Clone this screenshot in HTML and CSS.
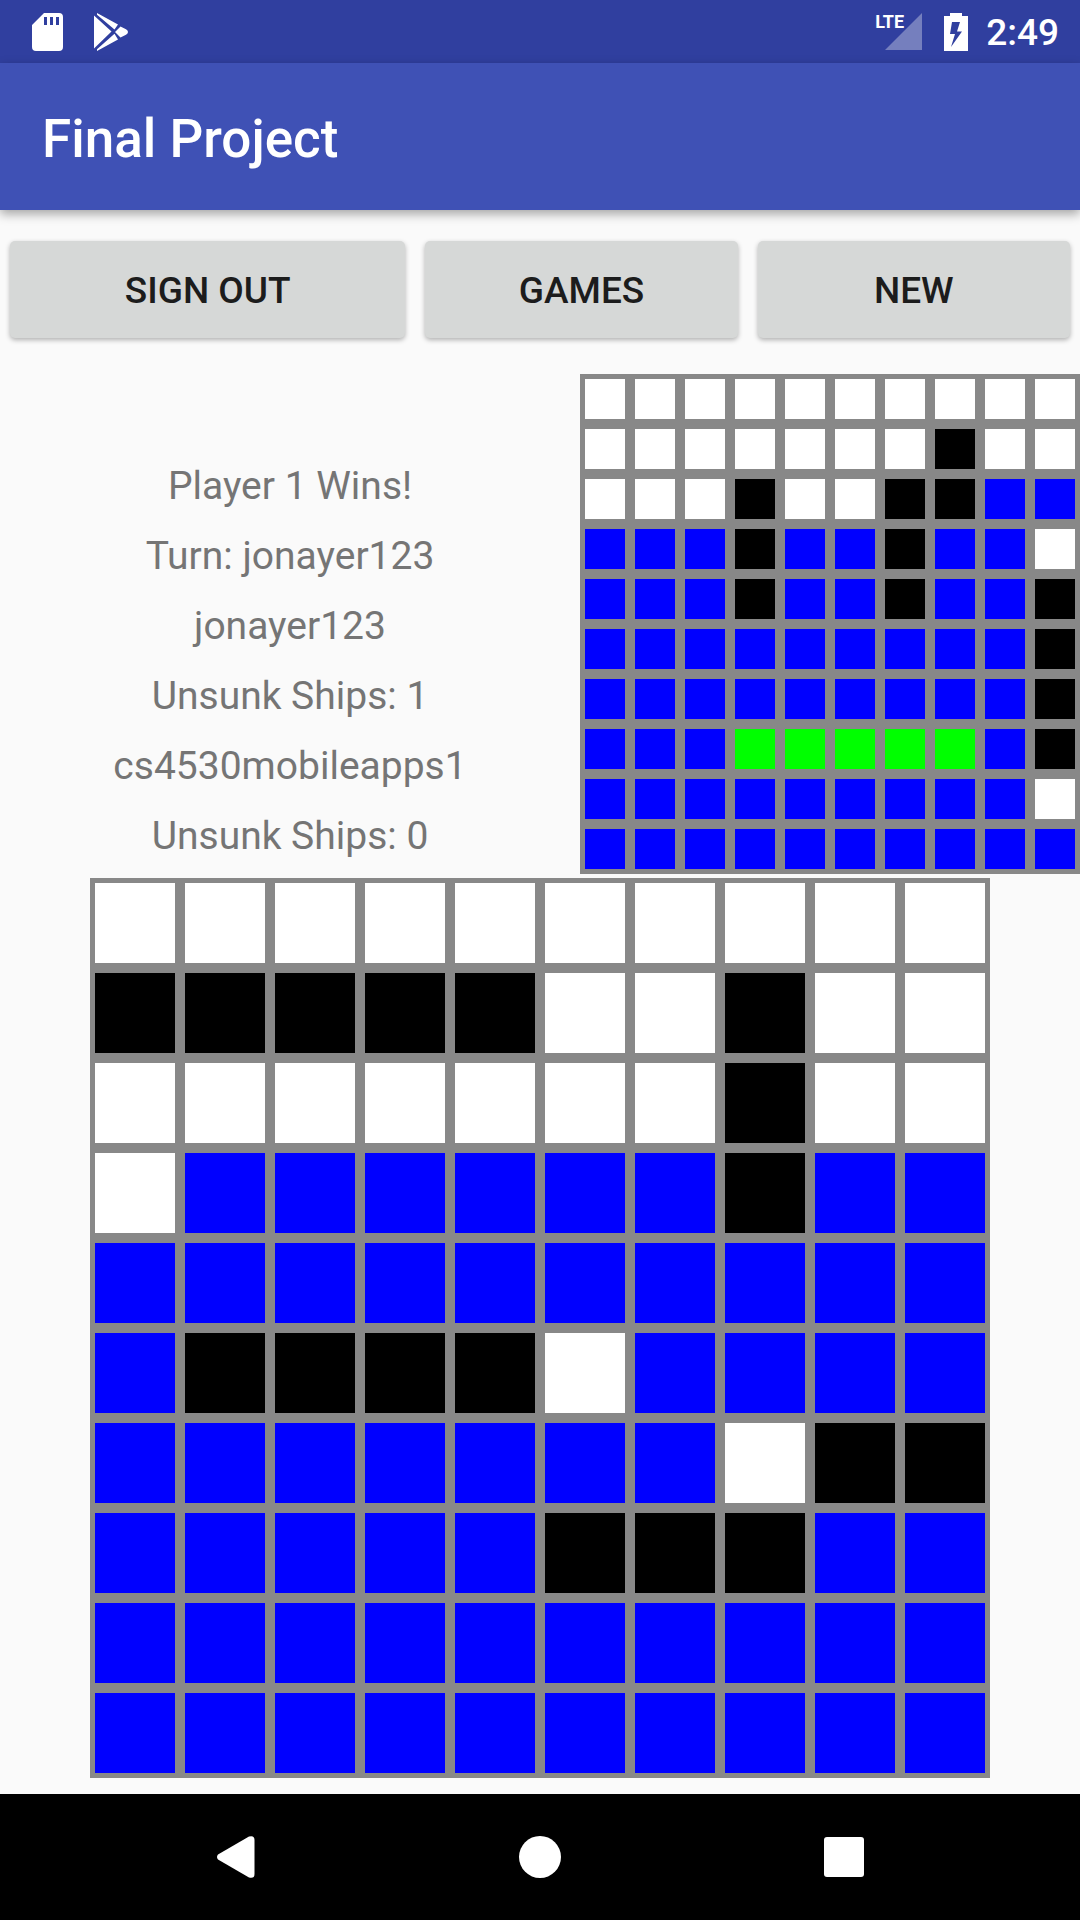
FILE: index.html
```
<!DOCTYPE html>
<html lang="en">
<head>
<meta charset="utf-8">
<meta name="viewport" content="width=device-width, initial-scale=1">
<title>Final Project</title>
<link rel="stylesheet" href="styles.css">
</head>
<body>
<div class="status-bar">
  <svg class="icon-sd" viewBox="0 0 31 38" aria-hidden="true"><path fill-rule="evenodd" d="M12 0H27a4 4 0 0 1 4 4V34a4 4 0 0 1-4 4H4a4 4 0 0 1-4-4V12zM12 4v8h3V4zM18 4v8h3V4zM24 4v8h3V4z"/></svg>
  <svg class="icon-play" viewBox="0 0 34 38" aria-hidden="true"><path d="M0 2.5 17.5 18.5 0 35.5zM3 0 24 11.500 20.500 16.500 3 1.800zM3 38 24 26.500 20.500 20.800 3 36.200zM26.500 13.500 32 16.300Q36 19 32 21.800L26.500 24.500 21 19z"/></svg>
  <div class="signal">
    <svg class="icon-signal" viewBox="0 0 37 37" aria-hidden="true"><path d="M37 0V37H0z"/></svg>
    <span class="network">LTE</span>
  </div>
  <svg class="icon-battery" viewBox="0 0 24 38" aria-hidden="true"><path fill-rule="evenodd" d="M6 0H18V3H24V38H0V3H6zM8 9 6 21H11L7 34 18 18.500H13L16 9z"/></svg>
  <time class="clock">2:49</time>
</div>
<header class="app-bar"><h1 class="title">Final Project</h1></header>
<main class="content">
  <div class="actions">
    <button class="action" type="button">SIGN OUT</button>
    <button class="action" type="button">GAMES</button>
    <button class="action" type="button">NEW</button>
  </div>
  <section class="summary">
    <div class="info">
      <p>Player 1 Wins!</p>
      <p>Turn: jonayer123</p>
      <p>jonayer123</p>
      <p>Unsunk Ships: 1</p>
      <p>cs4530mobileapps1</p>
      <p>Unsunk Ships: 0</p>
    </div>
    <div class="board board-own" id="own" role="img" aria-label="Your fleet"></div>
  </section>
  <div class="board board-target" id="target" role="img" aria-label="Opponent waters"></div>
</main>
<nav class="nav-bar">
  <button class="nav-button" type="button" aria-label="Back"><svg viewBox="0 0 42 42" aria-hidden="true"><path d="M3 18.500 34 .500Q39.500-1 39.500 4V38Q39.500 43 34 41.500L3 23.500Q1 21 3 18.500z"/></svg></button>
  <button class="nav-button" type="button" aria-label="Home"><svg viewBox="0 0 42 42" aria-hidden="true"><circle cx="21" cy="21" r="21"/></svg></button>
  <button class="nav-button" type="button" aria-label="Overview"><svg viewBox="0 0 42 42" aria-hidden="true"><rect x="1" y="1" width="40" height="40" rx="3"/></svg></button>
</nav>
<script src="boards.js"></script>
</body>
</html>
```

FILE: boards.js
```
// w = miss, k = hit, b = open water, g = ship still afloat
const boards = {
  own: [
    "wwwwwwwwww", "wwwwwwwkww", "wwwkwwkkbb", "bbbkbbkbbw", "bbbkbbkbbk",
    "bbbbbbbbbk", "bbbbbbbbbk", "bbbgggggbk", "bbbbbbbbbw", "bbbbbbbbbb"
  ],
  target: [
    "wwwwwwwwww", "kkkkkwwkww", "wwwwwwwkww", "wbbbbbbkbb", "bbbbbbbbbb",
    "bkkkkwbbbb", "bbbbbbbwkk", "bbbbbkkkbb", "bbbbbbbbbb", "bbbbbbbbbb"
  ]
};
const states = { w: "miss", k: "hit", b: "water", g: "ship" };

for (const [id, rows] of Object.entries(boards)) {
  const board = document.getElementById(id);
  for (const code of rows.join("")) {
    const cell = document.createElement("span");
    cell.className = "cell " + states[code];
    board.append(cell);
  }
}
```

FILE: styles.css
```
* {
  box-sizing: border-box;
}

body {
  margin: 0;
  min-height: 100vh;
  display: flex;
  flex-direction: column;
  background: #fafafa;
  font-family: Roboto, "Liberation Sans", sans-serif;
}

.status-bar {
  display: flex;
  align-items: center;
  height: 63px;
  padding: 0 21px 0 32px;
  background: #303f9f;
  color: #fff;
}

.status-bar svg {
  display: block;
  fill: #fff;
}

.icon-sd {
  width: 31px;
  height: 38px;
}

.icon-play {
  width: 34px;
  height: 38px;
  margin-left: 31px;
}

.signal {
  position: relative;
  margin-left: auto;
  margin-right: 22px;
}

.status-bar .icon-signal {
  width: 37px;
  height: 37px;
  fill: #757fbe;
}

.network {
  position: absolute;
  right: 18px;
  top: 0;
  font-size: 18px;
  font-weight: 700;
  line-height: 18px;
}

.icon-battery {
  width: 24px;
  height: 38px;
}

.clock {
  margin-left: 18px;
  padding-top: 3px;
  font-size: 37px;
  font-weight: 500;
  line-height: 44px;
}

.app-bar {
  display: flex;
  align-items: center;
  height: 147px;
  padding: 4px 42px 0;
  background: #3f51b5;
  color: #fff;
  box-shadow: 0 4px 10px rgba(0, 0, 0, 0.35);
}

.title {
  margin: 0;
  font-size: 53px;
  font-weight: 500;
  line-height: 62px;
}

.content {
  flex: 1;
  display: flex;
  flex-direction: column;
  padding: 31px 0 16px;
}

.actions {
  display: grid;
  grid-template-columns: 5fr 4fr 4fr;
}

.action {
  height: 97px;
  margin: 0 10px;
  padding: 3px 0 0;
  border: 0;
  border-radius: 5px;
  background: #d6d8d7;
  box-shadow: 0 2px 5px rgba(0, 0, 0, 0.3);
  color: #1c1c1c;
  font: 500 37px/44px Roboto, "Liberation Sans", sans-serif;
}

.summary {
  display: flex;
  align-items: flex-end;
  margin-top: 36px;
}

.info {
  flex: 1;
  padding-bottom: 3px;
  color: #757575;
  font-size: 39px;
  line-height: 70px;
  text-align: center;
}

.info p {
  margin: 0;
}

.board {
  display: grid;
  grid-template-columns: repeat(10, 1fr);
  grid-template-rows: repeat(10, 1fr);
  gap: 10px;
  padding: 5px;
  aspect-ratio: 1;
  background: #888;
}

.board-own {
  width: 500px;
  max-width: 50%;
}

.board-target {
  width: 900px;
  max-width: 100%;
  margin: 4px auto 0;
}

.miss {
  background: #fff;
}

.hit {
  background: #000;
}

.water {
  background: #00f;
}

.ship {
  background: #0f0;
}

.nav-bar {
  display: grid;
  grid-template-columns: repeat(3, 1fr);
  height: 126px;
  padding: 0 84px;
  background: #000;
}

.nav-button {
  display: flex;
  align-items: center;
  justify-content: center;
  padding: 0;
  border: 0;
  background: none;
}

.nav-button svg {
  width: 42px;
  height: 42px;
  fill: #fff;
}
```
